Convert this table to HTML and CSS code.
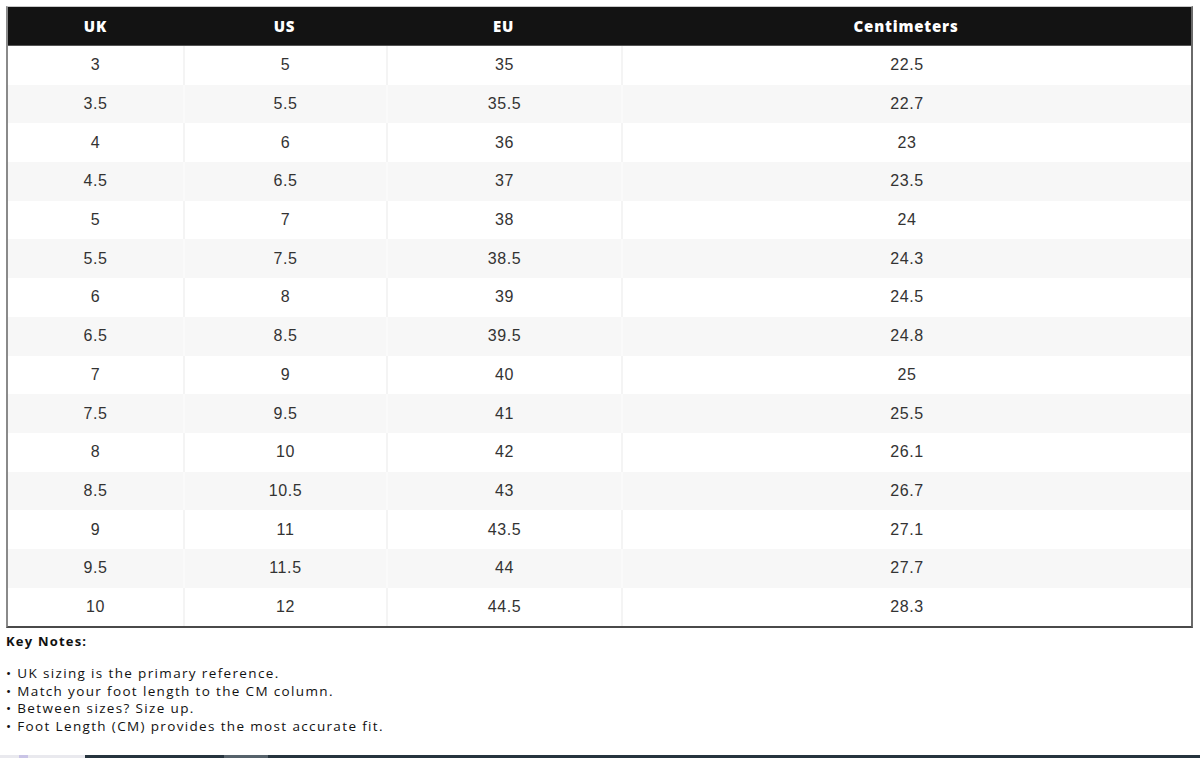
FILE: index.html
```html
<!DOCTYPE html>
<html lang="en">
<head>
<meta charset="utf-8">
<title>Size Chart</title>
<link rel="stylesheet" href="styles.css">
</head>
<body>
<div class="page">
  <div class="content">
    <table class="chart">
      <colgroup>
        <col class="c-uk"><col class="c-us"><col class="c-eu"><col class="c-cm">
      </colgroup>
      <thead>
        <tr><th>UK</th><th>US</th><th>EU</th><th>Centimeters</th></tr>
      </thead>
      <tbody>
        <tr><td>3</td><td>5</td><td>35</td><td>22.5</td></tr>
        <tr><td>3.5</td><td>5.5</td><td>35.5</td><td>22.7</td></tr>
        <tr><td>4</td><td>6</td><td>36</td><td>23</td></tr>
        <tr><td>4.5</td><td>6.5</td><td>37</td><td>23.5</td></tr>
        <tr><td>5</td><td>7</td><td>38</td><td>24</td></tr>
        <tr><td>5.5</td><td>7.5</td><td>38.5</td><td>24.3</td></tr>
        <tr><td>6</td><td>8</td><td>39</td><td>24.5</td></tr>
        <tr><td>6.5</td><td>8.5</td><td>39.5</td><td>24.8</td></tr>
        <tr><td>7</td><td>9</td><td>40</td><td>25</td></tr>
        <tr><td>7.5</td><td>9.5</td><td>41</td><td>25.5</td></tr>
        <tr><td>8</td><td>10</td><td>42</td><td>26.1</td></tr>
        <tr><td>8.5</td><td>10.5</td><td>43</td><td>26.7</td></tr>
        <tr><td>9</td><td>11</td><td>43.5</td><td>27.1</td></tr>
        <tr><td>9.5</td><td>11.5</td><td>44</td><td>27.7</td></tr>
        <tr><td>10</td><td>12</td><td>44.5</td><td>28.3</td></tr>
      </tbody>
    </table>
    <div class="notes">
      <p class="notes-title">Key Notes:</p>
      <ul class="notes-list">
        <li>• UK sizing is the primary reference.</li>
        <li>• Match your foot length to the CM column.</li>
        <li>• Between sizes? Size up.</li>
        <li>• Foot Length (CM) provides the most accurate fit.</li>
      </ul>
    </div>
  </div>
  <div class="bottom-bar">
    <span class="seg seg-light"><span class="seg-dot"></span></span>
    <span class="seg seg-dark1"></span>
    <span class="seg seg-mid"></span>
    <span class="seg seg-dark2"></span>
  </div>
</div>
</body>
</html>
```

FILE: styles.css
```css
html, body {
  margin: 0;
  padding: 0;
  background: #fff;
}
.page {
  display: flex;
  flex-direction: column;
  height: 758px;
  overflow: hidden;
}
.content {
  padding: 6px 7px 0 6px;
  flex: 1;
}
.chart {
  width: 1187px;
  border-collapse: separate;
  border-spacing: 0;
  table-layout: fixed;
  border-top: 1px solid #c8c8c8;
  border-left: 2px solid #8a8a8a;
  border-right: 2px solid #6a6a6a;
  border-bottom: 2px solid #4a4a4a;
  font-family: "Liberation Sans", Arial, sans-serif;
}
.c-uk { width: 175px; }
.c-us { width: 203px; }
.c-eu { width: 235px; }
.c-cm { width: auto; }
.chart th {
  background: #131313;
  color: #fff;
  font-family: "Open Sans", "Liberation Sans", sans-serif;
  font-weight: 800;
  font-size: 15px;
  letter-spacing: 0.8px;
  height: 38px;
  padding: 0;
  text-align: center;
  vertical-align: middle;
  border-bottom: 1px solid #555;
}
.chart td {
  height: 38.7px;
  padding: 0;
  text-align: center;
  vertical-align: middle;
  color: #333;
  font-size: 16px;
  letter-spacing: 0.6px;
}
.chart td + td {
  border-left: 2px solid #f4f4f4;
}
.chart tbody tr:nth-child(even) td {
  background: #f7f7f7;
}
.chart tbody tr:nth-child(even) td + td {
  border-left-color: #fafafa;
}
.notes {
  font-family: "Open Sans", "Liberation Sans", sans-serif;
  color: #111;
}
.notes-title {
  margin: 4px 0 0 0;
  font-weight: 700;
  font-size: 13px;
  letter-spacing: 1.2px;
  line-height: 18px;
}
.notes-list {
  list-style: none;
  margin: 15px 0 0 0;
  padding: 0;
  font-size: 13.5px;
  letter-spacing: 1.35px;
  line-height: 17.4px;
}
.bottom-bar {
  display: flex;
  height: 3px;
  flex: none;
}
.seg { display: block; height: 100%; }
.seg-light { width: 85px; background: #e9e9ee; display: flex; }
.seg-dot { width: 9px; margin-left: 19px; background: #c9c4e6; }
.seg-dark1 { width: 139px; background: #26343e; }
.seg-mid { width: 44px; background: #56626b; }
.seg-dark2 { flex: 1; background: #26343e; }
```
